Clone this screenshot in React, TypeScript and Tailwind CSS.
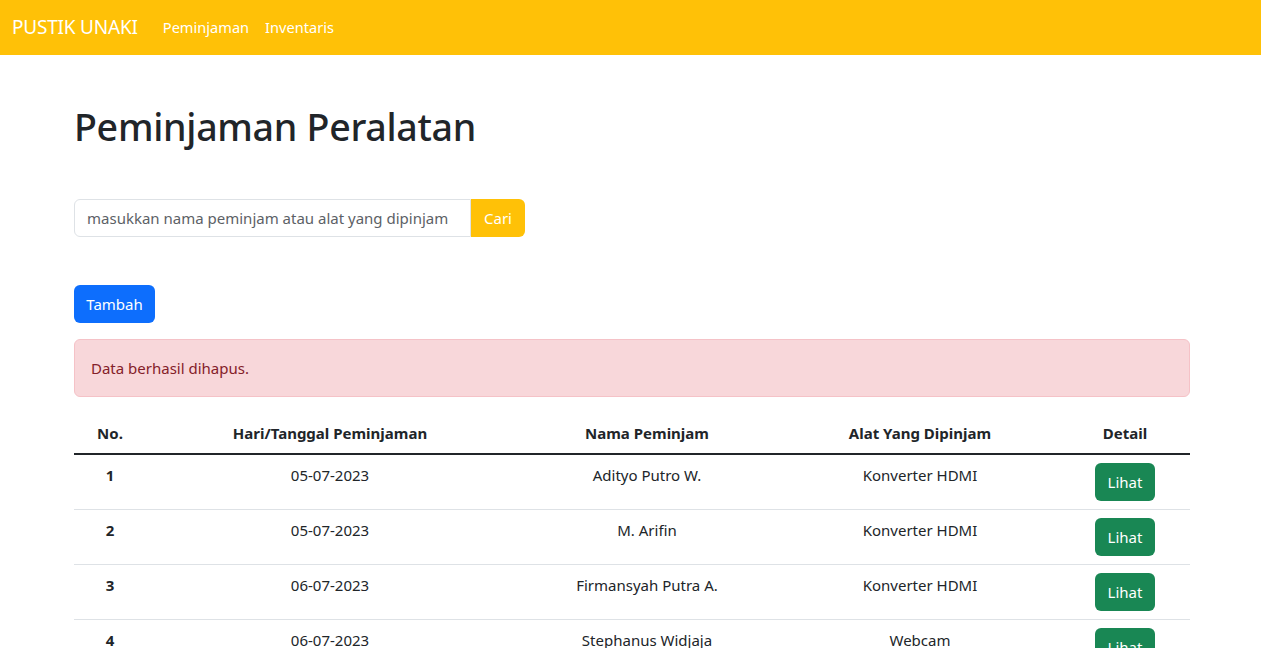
import React from "react";

type Loan = {
  no: number;
  date: string;
  name: string;
  item: string;
};

const loans: Loan[] = [
  { no: 1, date: "05-07-2023", name: "Adityo Putro W.", item: "Konverter HDMI" },
  { no: 2, date: "05-07-2023", name: "M. Arifin", item: "Konverter HDMI" },
  { no: 3, date: "06-07-2023", name: "Firmansyah Putra A.", item: "Konverter HDMI" },
  { no: 4, date: "06-07-2023", name: "Stephanus Widjaja", item: "Webcam" },
];

function Navbar() {
  return (
    <nav className="h-[55px] bg-[#ffc107] flex items-center px-3">
      <a className="text-white text-[19px] mr-[25px] tracking-[-0.2px]">PUSTIK UNAKI</a>
      <div className="flex gap-[16px] text-white text-[14.6px]">
        <a>Peminjaman</a>
        <a>Inventaris</a>
      </div>
    </nav>
  );
}

export default function App() {
  return (
    <div className="min-h-screen bg-white text-[#212529] text-[15px] font-['Noto_Sans',sans-serif]">
      <Navbar />
      <main className="ml-[74px] w-[1116px] pt-[48px]">
        <h1 className="text-[37.6px] font-medium leading-[48px] tracking-[-0.3px]">
          Peminjaman Peralatan
        </h1>

        {/* search */}
        <div className="mt-[48px] flex w-[451px] h-[38px]">
          <input
            className="flex-1 min-w-0 border border-[#dee2e6] rounded-l-[6px] px-3 text-[15px] placeholder:text-[#5c6166] outline-none"
            placeholder="masukkan nama peminjam atau alat yang dipinjam"
          />
          <button className="w-[54px] bg-[#ffc107] text-white rounded-r-[6px] text-[15px]">
            Cari
          </button>
        </div>

        <button className="mt-[48px] h-[38px] px-3 w-[81px] bg-[#0d6efd] text-white rounded-[6px] text-[15px]">
          Tambah
        </button>

        <div className="mt-[16px] h-[58px] flex items-center px-[16px] bg-[#f8d7da] border border-[#f5c2c7] rounded-[6px] text-[#842029]">
          Data berhasil dihapus.
        </div>

        <table className="mt-[16px] w-full table-fixed border-collapse text-center">
          <colgroup>
            <col className="w-[72px]" />
            <col className="w-[368px]" />
            <col className="w-[266px]" />
            <col className="w-[280px]" />
            <col className="w-[130px]" />
          </colgroup>
          <thead>
            <tr className="border-b-2 border-[#212529]">
              <th className="py-[8px] font-bold leading-[24px]">No.</th>
              <th className="py-[8px] font-bold leading-[24px]">Hari/Tanggal Peminjaman</th>
              <th className="py-[8px] font-bold leading-[24px]">Nama Peminjam</th>
              <th className="py-[8px] font-bold leading-[24px]">Alat Yang Dipinjam</th>
              <th className="py-[8px] font-bold leading-[24px]">Detail</th>
            </tr>
          </thead>
          <tbody>
            {loans.map((l) => (
              <tr key={l.no} className="border-b border-[#dee2e6] align-top">
                <td className="p-[8px] leading-[24px] font-bold">{l.no}</td>
                <td className="p-[8px] leading-[24px]">{l.date}</td>
                <td className="p-[8px] leading-[24px]">{l.name}</td>
                <td className="p-[8px] leading-[24px]">{l.item}</td>
                <td className="p-[8px]">
                  <button className="h-[38px] w-[60px] bg-[#198754] text-white rounded-[6px]">
                    Lihat
                  </button>
                </td>
              </tr>
            ))}
          </tbody>
        </table>
      </main>
    </div>
  );
}
